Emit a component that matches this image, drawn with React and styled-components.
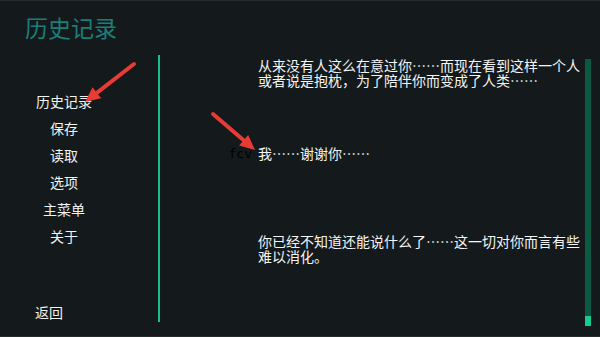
import React from "react";
import styled, { createGlobalStyle } from "styled-components";

const GlobalStyle = createGlobalStyle`
  html, body {
    margin: 0;
    padding: 0;
    background: #141a1b;
  }
  * {
    box-sizing: border-box;
  }
`;

const Screen = styled.div`
  position: relative;
  width: 600px;
  height: 337px;
  background: #141a1b;
  border-top: 1px solid #262b2c;
  border-bottom: 1px solid #262b2c;
  display: flex;
  flex-direction: column;
  font-family: "Noto Sans CJK SC", "Noto Sans", sans-serif;
  overflow: hidden;
`;

const Header = styled.div`
  height: 54px;
  padding: 9px 0 0 25px;
`;

const Title = styled.h1`
  margin: 0;
  font-size: 23px;
  font-weight: 400;
  line-height: 34px;
  color: #1b7e79;
`;

const Body = styled.div`
  display: flex;
  height: 267px;
`;

const Sidebar = styled.nav`
  width: 160px;
  border-right: 2px solid #1bbf8b;
  display: flex;
  flex-direction: column;
  justify-content: space-between;
  padding-top: 33px;
`;

const Menu = styled.ul`
  list-style: none;
  margin: 0;
  padding: 0;
  width: 128px;
`;

const MenuItem = styled.li`
  text-align: center;
  font-size: 14px;
  line-height: 27px;
  color: #f2f2f2;
  cursor: pointer;
`;

const BackButton = styled.div`
  padding-left: 35px;
  font-size: 14px;
  line-height: 20px;
  color: #f2f2f2;
  cursor: pointer;
`;

const Content = styled.div`
  flex: 1;
  display: flex;
  padding-top: 3px;
`;

const Log = styled.div`
  flex: 1;
  display: flex;
  flex-direction: column;
`;

const Entry = styled.div`
  display: grid;
  grid-template-columns: 92px 324px;
  column-gap: 6px;
  height: 89px;
  align-items: start;
`;

const Speaker = styled.span`
  text-align: right;
  font-family: "DejaVu Sans Mono", "Liberation Mono", monospace;
  font-size: 13px;
  line-height: 15px;
  color: #000000;
`;

const Line = styled.p`
  margin: 0;
  font-size: 14px;
  line-height: 14.5px;
  color: #f5f5f5;
`;

const Scrollbar = styled.div`
  width: 6px;
  height: 267px;
  margin: 1px 9px 0 3px;
  background: #0a5940;
  display: flex;
  flex-direction: column;
  justify-content: flex-end;
`;

const Thumb = styled.div`
  height: 10px;
  background: #16cc93;
`;

const Arrows = styled.svg`
  position: absolute;
  left: 0;
  top: 0;
  pointer-events: none;
`;

const menu = ["历史记录", "保存", "读取", "选项", "主菜单", "关于"];

const history = [
  {
    who: "",
    text: "从来没有人这么在意过你……而现在看到这样一个人或者说是抱枕，为了陪伴你而变成了人类……",
  },
  { who: "fcv", text: "我……谢谢你……" },
  {
    who: "",
    text: "你已经不知道还能说什么了……这一切对你而言有些难以消化。",
  },
];

function Arrow({ x1, y1, x2, y2 }) {
  const angle = Math.atan2(y2 - y1, x2 - x1);
  const len = 15;
  const half = 7;
  const bx = x2 - Math.cos(angle) * len;
  const by = y2 - Math.sin(angle) * len;
  const px = -Math.sin(angle) * half;
  const py = Math.cos(angle) * half;
  return (
    <g fill="#e83b36" stroke="#e83b36">
      <line x1={x1} y1={y1} x2={bx} y2={by} strokeWidth="4" strokeLinecap="round" />
      <polygon
        points={`${x2},${y2} ${bx + px},${by + py} ${bx - px},${by - py}`}
        stroke="none"
      />
    </g>
  );
}

export default function App() {
  return (
    <>
      <GlobalStyle />
      <Screen>
        <Header>
          <Title>历史记录</Title>
        </Header>
        <Body>
          <Sidebar>
            <Menu>
              {menu.map((m) => (
                <MenuItem key={m}>{m}</MenuItem>
              ))}
            </Menu>
            <BackButton>返回</BackButton>
          </Sidebar>
          <Content>
            <Log>
              {history.map((h, i) => (
                <Entry key={i}>
                  <Speaker>{h.who}</Speaker>
                  <Line>{h.text}</Line>
                </Entry>
              ))}
            </Log>
            <Scrollbar>
              <Thumb />
            </Scrollbar>
          </Content>
        </Body>
        <Arrows width="600" height="337" viewBox="0 0 600 337">
          <Arrow x1={134} y1={63} x2={85} y2={101} />
          <Arrow x1={213} y1={113} x2={255} y2={149} />
        </Arrows>
      </Screen>
    </>
  );
}
